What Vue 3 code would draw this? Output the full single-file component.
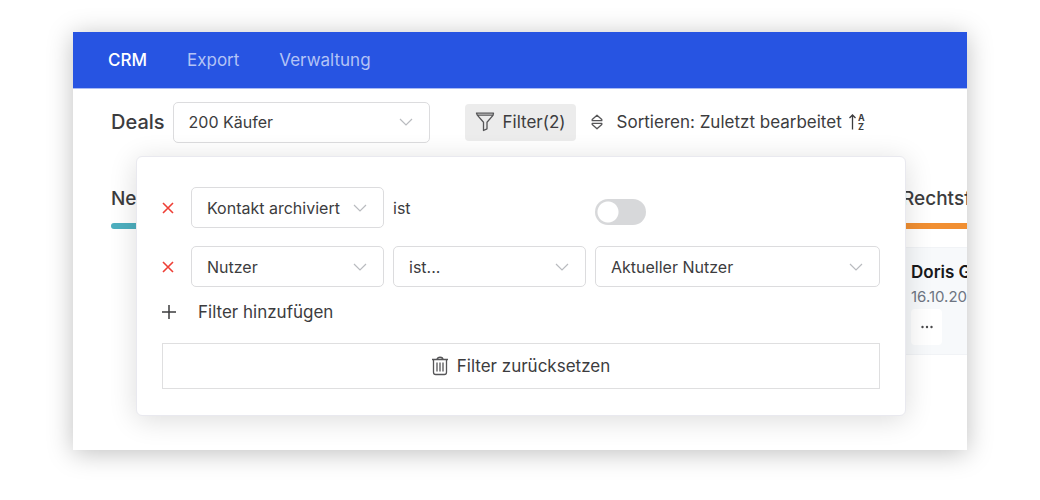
<script setup>
import { ref } from 'vue'

const nav = [
  { label: 'CRM', active: true },
  { label: 'Export', active: false },
  { label: 'Verwaltung', active: false },
]
const columns = [
  { title: 'Ne', tone: 'teal', cards: [] },
  { title: 'Rechtsf', tone: 'orange', cards: [{ name: 'Doris G', date: '16.10.20' }] },
]
const pipeline = ref('200 Käufer')
const archived = ref(false)
</script>

<template>
  <div class="stage">
    <div class="window">
      <nav class="topbar">
        <a v-for="item in nav" :key="item.label" href="#" :class="{ active: item.active }">{{ item.label }}</a>
      </nav>

      <header class="toolbar">
        <label class="title" for="pipeline">Deals</label>
        <div class="select pipeline">
          <select id="pipeline" v-model="pipeline">
            <option>200 Käufer</option>
          </select>
          <svg class="chevron" viewBox="0 0 14 8"><path d="M1 1l6 6 6-6" /></svg>
        </div>
        <button type="button" class="filter">
          <svg class="icon" width="20" height="20" viewBox="0 0 20 20">
            <path d="M1.500 1.200h17l-.5 2.200-6 6.800v6.600l-3.500 1.700v-8.300l-6-6.800zM2.500 3.200h15" />
          </svg>
          <span>Filter(2)</span>
        </button>
        <button type="button" class="sort">
          <svg class="icon" width="12" height="16" viewBox="0 0 12 16">
            <path d="M6 1.200l4.800 4.300v1.200H1.200V5.500zM6 14.800l-4.800-4.300V9.300h9.600v1.200z" />
          </svg>
          <span>Sortieren: Zuletzt bearbeitet</span>
          <svg class="order" width="17" height="18" viewBox="0 0 17 18">
            <path d="M4.500 16.500V2.500M1.500 5l3-3 3 3" />
            <text x="10" y="8">A</text>
            <text x="10" y="17">Z</text>
          </svg>
        </button>
      </header>

      <main class="board">
        <section v-for="col in columns" :key="col.title" class="column">
          <h2>{{ col.title }}</h2>
          <div class="bar" :class="col.tone"></div>
          <article v-for="card in col.cards" :key="card.name" class="card">
            <h3>{{ card.name }}</h3>
            <p>{{ card.date }}</p>
            <button type="button" class="more" aria-label="Mehr">
              <svg width="12" height="4" viewBox="0 0 12 4">
                <circle cx="1.5" cy="2" r="1.2" /><circle cx="6" cy="2" r="1.2" /><circle cx="10.5" cy="2" r="1.2" />
              </svg>
            </button>
          </article>
        </section>
      </main>

      <form class="popover" @submit.prevent>
        <div class="rule">
          <button type="button" class="remove" aria-label="Filter entfernen">
            <svg width="12" height="12" viewBox="0 0 12 12"><path d="M1 1l10 10M11 1L1 11" /></svg>
          </button>
          <div class="select">
            <select aria-label="Feld"><option>Kontakt archiviert</option></select>
            <svg class="chevron" viewBox="0 0 14 8"><path d="M1 1l6 6 6-6" /></svg>
          </div>
          <label class="is" for="archived">ist</label>
          <input id="archived" v-model="archived" class="switch" type="checkbox" role="switch">
        </div>
        <div class="rule">
          <button type="button" class="remove" aria-label="Filter entfernen">
            <svg width="12" height="12" viewBox="0 0 12 12"><path d="M1 1l10 10M11 1L1 11" /></svg>
          </button>
          <div class="select">
            <select aria-label="Feld"><option>Nutzer</option></select>
            <svg class="chevron" viewBox="0 0 14 8"><path d="M1 1l6 6 6-6" /></svg>
          </div>
          <div class="select">
            <select aria-label="Operator"><option>ist...</option></select>
            <svg class="chevron" viewBox="0 0 14 8"><path d="M1 1l6 6 6-6" /></svg>
          </div>
          <div class="select">
            <select aria-label="Wert"><option>Aktueller Nutzer</option></select>
            <svg class="chevron" viewBox="0 0 14 8"><path d="M1 1l6 6 6-6" /></svg>
          </div>
        </div>
        <button type="button" class="add">
          <svg width="14" height="14" viewBox="0 0 14 14"><path d="M7 0v14M0 7h14" /></svg>
          <span>Filter hinzufügen</span>
        </button>
        <button type="button" class="reset">
          <svg class="icon" width="16" height="20" viewBox="0 0 16 20">
            <path d="M0 3.500h16M5 3.500c0-3 6-3 6 0M1.500 3.500v12.800q0 2.200 2.200 2.200h8.600q2.200 0 2.200-2.200V3.500M5 6.500v9M8 6.500v9M11 6.500v9" />
          </svg>
          <span>Filter zurücksetzen</span>
        </button>
      </form>
    </div>
  </div>
</template>

<style>
body {
  margin: 0;
  background: #fff;
}
</style>

<style scoped>
* {
  box-sizing: border-box;
}
.stage {
  padding: 32px 73px 50px;
  font-family: Inter, "Liberation Sans", sans-serif;
  color: #3c3c3e;
}
.window {
  position: relative;
  overflow: hidden;
  padding-bottom: 95px;
  background: #fff;
  box-shadow: 0 3px 24px rgba(0, 0, 0, 0.25);
}
button {
  padding: 0;
  border: 0;
  background: none;
  color: inherit;
  font: inherit;
  cursor: pointer;
}
svg {
  flex: none;
  fill: none;
  stroke: currentColor;
}
.icon {
  stroke: #555557;
  stroke-width: 1.3;
  stroke-linejoin: round;
}
.topbar {
  display: flex;
  align-items: center;
  gap: 40px;
  height: 57px;
  padding: 0 35px;
  background: #2754e2;
  border-bottom: 1px solid #a9bbf5;
}
.topbar a {
  color: #b3c3f6;
  font-size: 17px;
  text-decoration: none;
}
.topbar a.active {
  color: #fff;
  font-weight: 500;
}
.toolbar {
  display: flex;
  align-items: center;
  height: 66px;
  padding: 0 38px;
  font-size: 17px;
  white-space: nowrap;
}
.title {
  margin-right: 8px;
  font-size: 20px;
  font-weight: 500;
}
.select {
  display: grid;
  align-items: center;
}
.select > * {
  grid-area: 1 / 1;
}
.select select {
  appearance: none;
  width: 100%;
  height: 41px;
  padding: 0 36px 0 15px;
  border: 1px solid #dcdcde;
  border-radius: 5px;
  background: #fff;
  color: inherit;
  font: 16px Inter, "Liberation Sans", sans-serif;
}
.chevron {
  justify-self: end;
  width: 14px;
  height: 8px;
  margin-right: 17px;
  stroke: #b9bbbf;
  stroke-width: 1.2;
  pointer-events: none;
}
.pipeline {
  width: 257px;
}
.filter {
  display: flex;
  align-items: center;
  gap: 8px;
  height: 37px;
  margin-left: 35px;
  padding: 0 10px;
  border-radius: 4px;
  background: #ececec;
}
.sort {
  display: flex;
  align-items: center;
  margin-left: 15px;
}
.sort span {
  margin: 0 6px 0 14px;
}
.order {
  stroke-width: 1.3;
}
.order text {
  fill: currentColor;
  stroke: none;
  font-size: 9px;
  font-weight: 700;
}
.board {
  display: grid;
  grid-template-columns: 1fr 65px;
  gap: 24px;
  padding: 32px 0 0 38px;
}
.column {
  min-width: 0;
  white-space: nowrap;
}
.column h2 {
  margin: 0 0 12px;
  font-size: 19px;
  font-weight: 500;
  line-height: 24px;
}
.bar {
  height: 6px;
  border-radius: 3px 0 0 3px;
}
.teal {
  background: #4dafbf;
}
.orange {
  background: #f18f32;
}
.card {
  margin-top: 18px;
  padding: 13px 0 9px 9px;
  border: 1px solid #f1f3f6;
  border-width: 1px 0;
  background: #f7f9fb;
}
.card h3 {
  margin: 0;
  color: #18181a;
  font-size: 17px;
  font-weight: 600;
  line-height: 22px;
}
.card p {
  margin: 5px 0 3px;
  color: #6e7582;
  font-size: 15px;
  line-height: 18px;
}
.more {
  display: grid;
  place-items: center;
  width: 31px;
  height: 36px;
  border-radius: 4px;
  background: #fff;
}
.more svg {
  fill: #4a4a4c;
  stroke: none;
}
.popover {
  position: absolute;
  top: 124px;
  left: 63px;
  right: 61px;
  padding: 30px 25px 26px;
  border: 1px solid #e9e9ef;
  border-radius: 6px;
  background: #fff;
  box-shadow: 0 4px 28px rgba(0, 0, 0, 0.14);
}
.rule {
  display: grid;
  grid-template-columns: 20px 193fr 193fr 285fr;
  align-items: center;
  gap: 9px;
}
.rule + .rule {
  margin-top: 18px;
}
.remove {
  display: flex;
  color: #ee3f36;
}
.remove svg {
  stroke-width: 1.6;
}
.is {
  font-size: 16px;
}
.switch {
  appearance: none;
  width: 51px;
  height: 26px;
  margin: 8px 0 0;
  border-radius: 13px;
  background: radial-gradient(circle at 13px 13px, #fff 10px, #d7d8da 11px);
}
.switch:checked {
  background: radial-gradient(circle at 38px 13px, #fff 10px, #2754e2 11px);
}
.add {
  display: flex;
  align-items: center;
  gap: 22px;
  margin: 14px 0 20px;
  font-size: 17px;
  line-height: 22px;
}
.add svg {
  stroke-width: 1.5;
}
.reset {
  display: flex;
  align-items: center;
  justify-content: center;
  gap: 9px;
  width: 100%;
  height: 46px;
  border: 1px solid #dfdfe0;
  font-size: 17px;
}
</style>
